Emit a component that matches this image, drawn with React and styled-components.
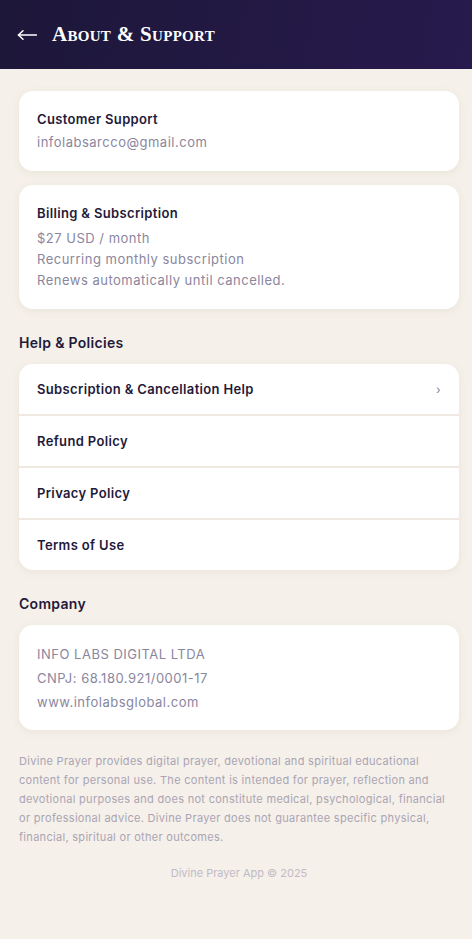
import React from 'react';
import styled, { createGlobalStyle } from 'styled-components';

const Global = createGlobalStyle`
  html, body { margin: 0; padding: 0; background: #f5f0e9; }
  body { font-family: "Inter", "Open Sans", "Liberation Sans", sans-serif; }
  * { box-sizing: border-box; }
`;

const Page = styled.div`
  min-height: 939px;
  background: #f5f0e9;
`;

const Header = styled.header`
  height: 69px;
  display: flex;
  align-items: center;
  gap: 15px;
  padding: 0 17px;
  background: linear-gradient(100deg, #1d1739 0%, #271a4d 100%);
  color: #fff;
`;

const Title = styled.h1`
  margin: 0;
  font-family: "Liberation Serif", serif;
  font-variant: small-caps;
  font-weight: 700;
  font-size: 21px;
  letter-spacing: 0.3px;
`;

const Main = styled.main`
  padding: 22px 13px 0 19px;
  display: flex;
  flex-direction: column;
`;

const Card = styled.section`
  background: #fff;
  border-radius: 14px;
  box-shadow: 0 2px 8px rgba(120, 100, 70, 0.08);
  padding: ${p => p.$pad || '18px'};
  margin-bottom: ${p => p.$mb || '14px'};
`;

const CardTitle = styled.h3`
  margin: 0 0 ${p => p.$gap || '4px'};
  font-size: 13px;
  font-weight: 600;
  letter-spacing: 0.35px;
  color: #1f1a3a;
  line-height: 20px;
`;

const Line = styled.p`
  margin: 0;
  font-size: 13px;
  letter-spacing: 0.5px;
  color: #8a869e;
  line-height: ${p => p.$lh || '21px'};
`;

const SectionTitle = styled.h2`
  margin: 24px 0 11px;
  font-size: 14px;
  font-weight: 600;
  letter-spacing: 0.3px;
  color: #1f1a3a;
  line-height: 20px;
`;

const List = styled.div`
  background: #fff;
  border-radius: 14px;
  overflow: hidden;
  box-shadow: 0 2px 8px rgba(120, 100, 70, 0.08);
  display: flex;
  flex-direction: column;
`;

const Row = styled.div`
  box-sizing: content-box;
  height: 50px;
  display: flex;
  align-items: center;
  justify-content: space-between;
  padding: 0 18px;
  font-size: 13px;
  font-weight: 600;
  letter-spacing: 0.35px;
  color: #1f1a3a;
  & + & { border-top: 2px solid #efe9e1; }
`;

const Chevron = styled.span`
  font-size: 12px;
  color: #8a869e;
  font-weight: 400;
`;

const Disclaimer = styled.p`
  margin: 22px 0 0;
  font-size: 11px;
  line-height: 19px;
  letter-spacing: 0.3px;
  color: #aaa5b5;
`;

const Footer = styled.p`
  margin: 18px 0 0;
  text-align: center;
  font-size: 11px;
  line-height: 16px;
  color: #c2bbc6;
`;

const BackArrow = () => (
  <svg width="20" height="12" viewBox="0 0 20 12" fill="none" stroke="#fff" strokeWidth="1.5" strokeLinecap="round">
    <path d="M1.5 6H19.5" />
    <path d="M6 1.8L1.5 6L6 10.2" />
  </svg>
);

const links = ['Subscription & Cancellation Help', 'Refund Policy', 'Privacy Policy', 'Terms of Use'];

export default function App() {
  return (
    <Page>
      <Global />
      <Header>
        <BackArrow />
        <Title>About &amp; Support</Title>
      </Header>
      <Main>
        <Card>
          <CardTitle $gap="3px">Customer Support</CardTitle>
          <Line>infolabsarcco@gmail.com</Line>
        </Card>
        <Card $mb="0">
          <CardTitle $gap="5px">Billing &amp; Subscription</CardTitle>
          <Line>$27 USD / month</Line>
          <Line>Recurring monthly subscription</Line>
          <Line>Renews automatically until cancelled.</Line>
        </Card>

        <SectionTitle>Help &amp; Policies</SectionTitle>
        <List>
          {links.map((l, i) => (
            <Row key={l}>
              {l}
              {i === 0 && <Chevron>›</Chevron>}
            </Row>
          ))}
        </List>

        <SectionTitle>Company</SectionTitle>
        <Card $mb="0" $pad="17px 18px 16px">
          <Line $lh="24px">INFO LABS DIGITAL LTDA</Line>
          <Line $lh="24px">CNPJ: 68.180.921/0001-17</Line>
          <Line $lh="24px">www.infolabsglobal.com</Line>
        </Card>

        <Disclaimer>
          Divine Prayer provides digital prayer, devotional and spiritual educational content for personal use. The content is intended for prayer, reflection and devotional purposes and does not constitute medical, psychological, financial or professional advice. Divine Prayer does not guarantee specific physical, financial, spiritual or other outcomes.
        </Disclaimer>
        <Footer>Divine Prayer App © 2025</Footer>
      </Main>
    </Page>
  );
}
